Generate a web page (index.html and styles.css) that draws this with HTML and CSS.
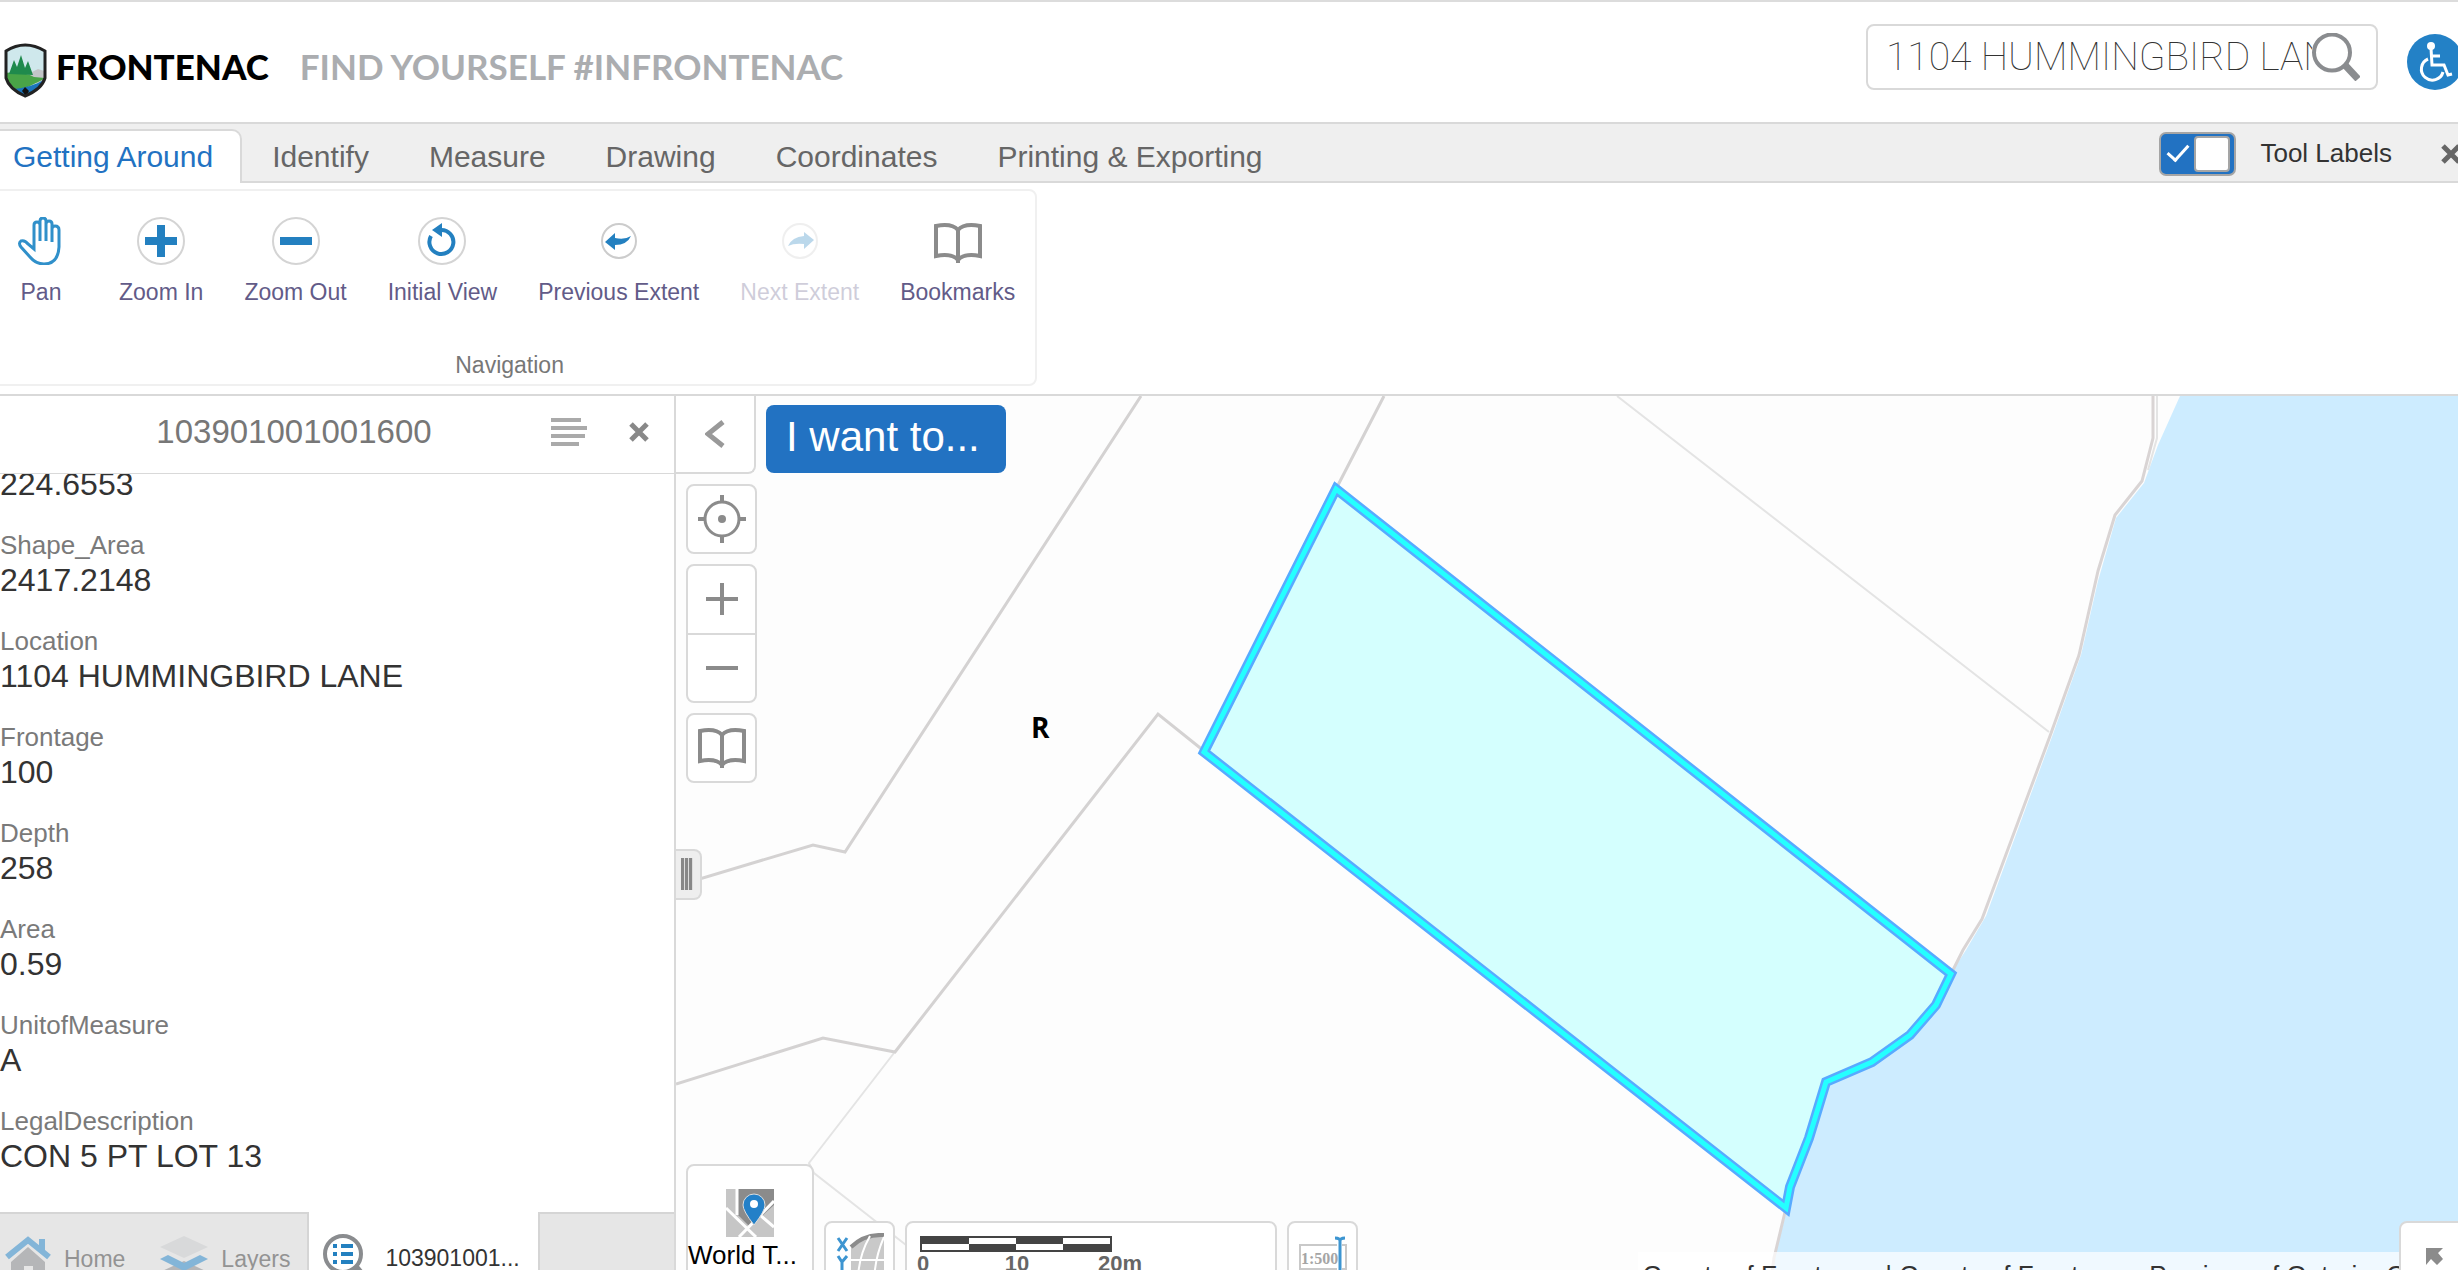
FILE: index.html
```html
<!doctype html>
<html lang="en">
<head>
  <meta charset="utf-8">
  <title>Frontenac Maps</title>
  <link rel="stylesheet" href="styles.css">
</head>
<body>
  <svg class="defs" width="0" height="0">
    <symbol id="book" viewBox="0 0 48 40">
      <path d="M2 3V33Q18 30 24 37Q30 30 46 33V3Q30 0 24 7Q18 0 2 3ZM24 7V40" fill="none" stroke="#8b8b8b" stroke-width="4"/>
    </symbol>
    <symbol id="cross" viewBox="0 0 20 20">
      <path d="M2 2L18 18M18 2L2 18" fill="none" stroke="currentColor" stroke-width="5"/>
    </symbol>
  </svg>

  <div class="app">
    <header class="header">
      <svg class="shield" viewBox="0 0 43 55">
        <clipPath id="shape"><path d="M2 8Q21 -4 41 8V35Q38 46 21 53Q5 46 2 35Z"/></clipPath>
        <g clip-path="url(#shape)">
          <path fill="#cfe8ec" d="M0 0H43V55H0Z"/>
          <path fill="#c3c6c8" d="M20 33L34 26L43 29V40H20Z"/>
          <path fill="#49a447" d="M0 30Q20 28 30 34L42 35L20 46H0Z"/>
          <path fill="#1f8a4c" d="M5 31L10 17L13 24L17 12L21 25L24 18L29 32Z"/>
          <path fill="#1b75bb" d="M10 46Q30 44 43 35V55H10Z"/>
          <path fill="#111" d="M18 48L21 44L25 48L22 53Z"/>
        </g>
        <path d="M2 8Q21 -4 41 8V35Q38 46 21 53Q5 46 2 35Z" fill="none" stroke="#222" stroke-width="3"/>
      </svg>
      <span class="brand">FRONTENAC</span>
      <span class="tagline">FIND YOURSELF #INFRONTENAC</span>
      <form class="search">
        <input type="text" aria-label="Search" value="1104 HUMMINGBIRD LANE">
        <button type="button" aria-label="Search">
          <svg width="48" height="48" viewBox="0 0 48 48"><path d="M32 31L46 46" stroke="#8a8c8f" stroke-width="7"/><circle cx="20" cy="19.500" r="18" fill="#fff" stroke="#8a8c8f" stroke-width="4"/></svg>
        </button>
      </form>
      <button class="access" type="button" aria-label="Accessibility">
        <svg width="56" height="56" viewBox="0 0 56 56">
          <circle cx="28" cy="28" r="28" fill="#2381c6"/>
          <circle cx="24" cy="12" r="4" fill="#fff"/>
          <path d="M24 14L25 31H37L41 41L45 40M25 22H33M21 25A11 11 0 1 0 36 38" fill="none" stroke="#fff" stroke-width="3"/>
        </svg>
      </button>
    </header>

    <nav class="tabs">
      <button class="tab active" type="button">Getting Around</button>
      <button class="tab" type="button">Identify</button>
      <button class="tab" type="button">Measure</button>
      <button class="tab" type="button">Drawing</button>
      <button class="tab" type="button">Coordinates</button>
      <button class="tab" type="button">Printing &amp; Exporting</button>
      <div class="options">
        <input type="checkbox" id="labels" class="toggle" checked>
        <label for="labels">Tool Labels</label>
        <button class="close" type="button" aria-label="Close toolbar"><svg width="20" height="20"><use href="#cross"/></svg></button>
      </div>
    </nav>

    <div class="ribbon">
      <section class="group">
        <div class="tools">
          <button class="tool" type="button">
            <svg width="48" height="48" viewBox="0 0 48 48"><path d="M17 31V8Q17 5 20 5Q23 5 23 8V24V4Q23 1 26 1Q29 1 29 4V24V7Q29 4 32 4Q35 4 35 7V25V12Q35 9 38 9Q42 9 42 13V30Q41 47 27 47Q19 47 13 40L4 30Q1 26 4 24Q8 23 11 27L17 32Z" fill="none" stroke="#3090ca" stroke-width="3"/></svg>
            <span>Pan</span>
          </button>
          <button class="tool" type="button">
            <svg width="48" height="48" viewBox="0 0 48 48"><circle cx="24" cy="24" r="23" fill="#fff" stroke="#d4d4d4" stroke-width="2"/><path d="M8 24H40M24 8V40" stroke="#2380c0" stroke-width="8"/></svg>
            <span>Zoom In</span>
          </button>
          <button class="tool" type="button">
            <svg width="48" height="48" viewBox="0 0 48 48"><circle cx="24" cy="24" r="23" fill="#fff" stroke="#d4d4d4" stroke-width="2"/><path d="M8 24H40" stroke="#2380c0" stroke-width="8"/></svg>
            <span>Zoom Out</span>
          </button>
          <button class="tool" type="button">
            <svg width="48" height="48" viewBox="0 0 48 48"><circle cx="24" cy="24" r="23" fill="#fff" stroke="#d4d4d4" stroke-width="2"/><path d="M13 19A12 12 0 1 0 23 13" fill="none" stroke="#2380c0" stroke-width="4"/><path d="M14 13L24 6V20Z" fill="#2380c0"/></svg>
            <span>Initial View</span>
          </button>
          <button class="tool" type="button">
            <svg width="48" height="48" viewBox="0 0 48 48"><circle cx="24" cy="24" r="17" fill="#fff" stroke="#ccc" stroke-width="2"/><path d="M10 25L20 16V21Q30 23 36 19Q32 28 20 28V33Z" fill="#2380c0"/></svg>
            <span>Previous Extent</span>
          </button>
          <button class="tool" type="button" disabled>
            <svg width="48" height="48" viewBox="0 0 48 48"><circle cx="24" cy="24" r="17" fill="#fff" stroke="#ccc" stroke-width="2"/><path d="M38 23L28 15V19Q16 20 12 29Q18 26 28 27V32Z" fill="#2380c0"/></svg>
            <span>Next Extent</span>
          </button>
          <button class="tool" type="button">
            <svg width="48" height="48" viewBox="0 -6 48 48"><use href="#book" width="48" height="40"/></svg>
            <span>Bookmarks</span>
          </button>
        </div>
        <div class="group-name">Navigation</div>
      </section>
    </div>

    <div class="main">
      <aside class="panel">
        <div class="panel-head">
          <h2>103901001001600</h2>
          <button type="button" aria-label="Menu"><svg width="36" height="28" viewBox="0 0 36 28"><path d="M0 2H30M0 10H36M0 18H34M0 26H28" stroke="#aaa" stroke-width="4"/></svg></button>
          <button type="button" aria-label="Close panel"><svg width="20" height="20"><use href="#cross"/></svg></button>
        </div>
        <dl class="details">
          <dd>224.6553</dd>
          <dt>Shape_Area</dt>
          <dd>2417.2148</dd>
          <dt>Location</dt>
          <dd>1104 HUMMINGBIRD LANE</dd>
          <dt>Frontage</dt>
          <dd>100</dd>
          <dt>Depth</dt>
          <dd>258</dd>
          <dt>Area</dt>
          <dd>0.59</dd>
          <dt>UnitofMeasure</dt>
          <dd>A</dd>
          <dt>LegalDescription</dt>
          <dd>CON 5 PT LOT 13</dd>
        </dl>
        <div class="panel-tabs">
          <div class="inactive">
            <button type="button">
              <svg width="46" height="46" viewBox="0 0 46 46"><path d="M6 26L23 11L40 26V46H28V30H19V46H6Z" fill="#b5b6b8"/><path d="M2 21L23 4L44 21M37 14V3" fill="none" stroke="#83b5d8" stroke-width="6"/></svg>
              Home
            </button>
            <button type="button">
              <svg width="48" height="46" viewBox="0 0 48 46"><path d="M0 36L24 25L48 36L24 47Z" fill="#b5b6b8"/><path d="M0 23L8 19L24 27L40 19L48 23L24 35Z" fill="#83b5d8"/><path d="M0 11L24 0L48 11L24 22Z" fill="#d8d9da"/></svg>
              Layers
            </button>
          </div>
          <button class="current" type="button">
            <svg width="46" height="50" viewBox="0 0 46 50"><path d="M33 33L44 46" stroke="#8a8c8f" stroke-width="6"/><circle cx="20" cy="20" r="18" fill="#fff" stroke="#8a8c8f" stroke-width="4"/><path d="M10 12H14M18 12H30M10 20H14M18 20H30M10 28H14M18 28H30" stroke="#2380c0" stroke-width="4"/></svg>
            103901001...
          </button>
          <div class="rest"></div>
        </div>
      </aside>

      <div class="map">
        <svg class="canvas" viewBox="676 396 1782 906" preserveAspectRatio="xMinYMin slice">
          <path class="water" d="M2180 396L2158 445L2144 483L2116 518L2098 581L2081 655L2053 734L1986 916L1966 950L1951 973L1826 1082L1792 1190L1776 1252L1768 1302H2458V396Z"/>
          <g class="lot">
            <path d="M1617 396L2049 732M894 1053L809 1163L814 1173L874 1220L906 1245"/>
            <path class="dark" d="M1141 396L845 852L813 845L676 886M1384 396L1336 489M676 1084L823 1038L895 1052L1158 714L1204 751"/>
            <path class="edge" d="M2153 396V438L2142 481L2115 515L2098 571L2079 655L2050 736L1982 919L1963 950L1953 970M1785 1212L1774 1258L1768 1302"/>
            <path d="M2157 396V438L2148 470"/>
          </g>
          <path class="parcel" d="M1336 489L1951 974L1936 1005L1910 1035L1872 1062L1826 1082L1809 1138L1790 1187L1786 1208L1204 752Z"/>
          <path class="parcel-core" d="M1336 489L1951 974L1936 1005L1910 1035L1872 1062L1826 1082L1809 1138L1790 1187L1786 1208L1204 752Z"/>
          <text x="1031" y="738">R</text>
        </svg>

        <div class="controls">
          <button class="collapse" type="button" aria-label="Hide panel"><svg width="20" height="28" viewBox="0 0 20 28"><path d="M18 2L3 14L18 26" fill="none" stroke="#999" stroke-width="5"/></svg></button>
          <button class="box" type="button" aria-label="My location"><svg width="48" height="48" viewBox="0 0 48 48"><circle cx="24" cy="24" r="17" fill="none" stroke="#8b8b8b" stroke-width="3"/><circle cx="24" cy="24" r="4" fill="#8b8b8b"/><path d="M24 0V8M24 40V48M0 24H8M40 24H48" stroke="#8b8b8b" stroke-width="4"/></svg></button>
          <div class="box zoom">
            <button type="button" aria-label="Zoom in"><svg width="32" height="32"><path d="M0 16H32M16 0V32" stroke="#8b8b8b" stroke-width="4"/></svg></button>
            <button type="button" aria-label="Zoom out"><svg width="32" height="32"><path d="M0 16H32" stroke="#8b8b8b" stroke-width="4"/></svg></button>
          </div>
          <button class="box" type="button" aria-label="Bookmarks"><svg width="48" height="40"><use href="#book"/></svg></button>
        </div>
        <button class="want" type="button">I want to...</button>
        <div class="handle"></div>

        <div class="bottom">
          <button class="box basemap" type="button">
            <svg width="48" height="48" viewBox="0 0 48 48">
              <path d="M0 0H48V48H0Z" fill="#c6c6c6"/><path d="M12 0H48V16L24 38L12 26Z" fill="#8b8b8b"/>
              <path d="M11 0V26M0 19L30 48M48 12L13 48M34 26L48 38" fill="none" stroke="#fff" stroke-width="3"/>
              <path d="M28 36Q17 22 17 16A11 11 0 0 1 39 16Q39 22 28 36Z" fill="#2380c8" stroke="#ddd" stroke-width="1"/><circle cx="28" cy="15" r="4" fill="#fff"/>
            </svg>
            <span>World T...</span>
          </button>
          <button class="box" type="button" aria-label="Coordinates">
            <svg width="48" height="48" viewBox="0 0 48 48">
              <path d="M15 48V14Q28 1 48 2V48Z" fill="#c9c9c9"/><path d="M15 14Q28 1 48 2M0 40L-1 48" fill="none" stroke="#8b8b8b" stroke-width="4"/>
              <path d="M34 3Q22 24 22 48M48 4Q39 24 38 48M15 27H48M15 42H48" fill="none" stroke="#fff" stroke-width="2"/>
              <path d="M2 5L11 18M11 5L2 18M2 23L6 29L11 23M6 29V37" fill="none" stroke="#3d95d1" stroke-width="3"/>
            </svg>
          </button>
          <div class="box scale">
            <div class="bar"><i></i><i></i><i></i><i></i></div>
            <div class="ticks"><span>0</span><span>10</span><span>20m</span></div>
          </div>
          <button class="box" type="button" aria-label="Map scale">
            <svg width="48" height="48" viewBox="0 0 48 48">
              <path d="M38 12H1V36H38M43 12H47V36H43" fill="none" stroke="#c9c9c9" stroke-width="2"/>
              <text x="2" y="31" class="ratio">1:500</text>
              <path d="M36 5Q41 5 41 8Q41 5 46 5M41 7V42" fill="none" stroke="#3d95d1" stroke-width="3"/>
            </svg>
          </button>
        </div>
        <div class="credits">County of Frontenac | County of Frontenac, Province of Ontario, C</div>
        <button class="box overview" type="button" aria-label="Overview map"><svg width="20" height="20" viewBox="0 0 20 20"><path d="M1 1H18L13 6L18 12L12 18L6 12L1 18Z" fill="#8b8b8b"/></svg></button>
      </div>
    </div>
  </div>
</body>
</html>
```
FILE: styles.css
```css
* { box-sizing: border-box; }
html, body { height: 100%; }
body {
  margin: 0;
  overflow: hidden;
  background: #fff;
  color: #333;
  font-family: "Liberation Sans", Arial, sans-serif;
}
button {
  margin: 0;
  padding: 0;
  border: 0;
  background: none;
  font: inherit;
  color: inherit;
}
svg { display: block; flex: none; }
.defs { position: absolute; }

/* runs a little past the bottom of the window */
.app {
  display: flex;
  flex-direction: column;
  height: calc(100% + 32px);
  overflow: hidden;
}

.header {
  display: flex;
  align-items: center;
  height: 124px;
  flex: none;
  padding-left: 4px;
  border-top: 2px solid #dcdcdc;
  border-bottom: 2px solid #d9d9d9;
  font-family: Lato, sans-serif;
  white-space: nowrap;
}
.shield { width: 43px; height: 55px; margin: 16px 9px 0 0; }
.brand {
  padding-top: 8px;
  font-size: 35px;
  font-weight: 900;
  color: #000;
}
.tagline {
  padding: 8px 0 0 31px;
  font-size: 35px;
  font-weight: 700;
  color: #abadb0;
}
.search {
  display: flex;
  align-items: center;
  width: 512px;
  height: 66px;
  margin: 0 29px 10px auto;
  padding: 0 16px 0 18px;
  border: 2px solid #d9d9d9;
  border-radius: 8px;
}
.search input {
  flex: 1;
  min-width: 0;
  padding: 0;
  border: 0;
  outline: 0;
  background: none;
  color: #333;
  font-family: Roboto, sans-serif;
  font-size: 39px;
  font-weight: 100;
}
.access { margin: 0 -5px 0 0; }

.tabs {
  display: flex;
  height: 59px;
  flex: none;
  padding-top: 5px;
  border-bottom: 2px solid #d9d9d9;
  background: #efefef;
}
.tab {
  padding: 3px 30px 0;
  font-size: 30px;
  color: #666;
}
.tab.active {
  margin-bottom: -2px;
  padding: 0 27px 0 13px;
  border: solid #d9d9d9;
  border-width: 2px 2px 0 0;
  border-radius: 0 10px 0 0;
  background: #fff;
  color: #2272c2;
}
.options {
  display: flex;
  align-items: center;
  margin: 0 -3px 3px auto;
  font-size: 26px;
}
.toggle {
  appearance: none;
  display: flex;
  align-items: center;
  justify-content: space-between;
  width: 77px;
  height: 44px;
  margin: 0 24px 0 0;
  padding: 0 4px 0 11px;
  border: 2px solid #a5a5a5;
  border-radius: 7px;
  background: #2272c2;
}
.toggle::before {
  content: "";
  width: 9px;
  height: 18px;
  margin-bottom: 6px;
  border: solid #fff;
  border-width: 0 3px 3px 0;
  transform: rotate(42deg);
}
.toggle::after {
  content: "";
  width: 32px;
  height: 32px;
  border: 2px solid #a5a5a5;
  border-radius: 4px;
  background: #fff;
}
.close { margin-left: 49px; color: #666; }

.ribbon {
  flex: none;
  padding: 6px 0 8px;
  border-bottom: 2px solid #d9d9d9;
}
.group {
  width: max-content;
  height: 197px;
  margin-left: -18px;
  border: 2px solid #f0f0f0;
  border-radius: 8px;
  font-size: 23px;
}
.tools { display: flex; gap: 1px; height: 160px; padding-top: 26px; }
.tool {
  display: flex;
  flex-direction: column;
  align-items: center;
  gap: 13px;
  min-width: 114px;
  padding: 0 20px;
  line-height: 28px;
  color: #625b88;
}
.tool:disabled { opacity: .3; }
.group-name { text-align: center; line-height: 28px; color: #777; }

.main { display: flex; flex: 1; min-height: 0; }
.panel {
  display: flex;
  flex-direction: column;
  width: 676px;
  flex: none;
  border-right: 2px solid #d9d9d9;
}
.panel-head {
  display: flex;
  align-items: center;
  flex: none;
  height: 78px;
  padding: 0 25px 6px 0;
  border-bottom: 1px solid #d9d9d9;
  color: #888;
}
.panel-head h2 {
  flex: 1;
  margin: 0;
  padding-left: 37px;
  font-size: 33px;
  font-weight: normal;
  text-align: center;
  color: #777;
}
.panel-head button { margin-left: 42px; }
.panel-head h2 + button { margin-left: 0; }
.details {
  display: flex;
  flex-direction: column;
  justify-content: flex-end;
  flex: 1;
  min-height: 0;
  margin: 0;
  padding-bottom: 8px;
  overflow: hidden;
}
.details dt {
  flex: none;
  margin-bottom: 4px;
  font-size: 26px;
  line-height: 26px;
  color: #7a7a7a;
}
.details dd {
  flex: none;
  margin: 0 0 29px;
  font-size: 32px;
  line-height: 37px;
}
.panel-tabs {
  display: flex;
  flex: none;
  height: 90px;
  font-size: 23px;
}
.panel-tabs button { display: flex; align-items: center; gap: 13px; }
.inactive {
  display: flex;
  gap: 35px;
  padding: 2px 17px 0 5px;
  border: solid #d5d5d5;
  border-width: 2px 2px 0 0;
  background: #e6e6e6;
  color: #939393;
}
.panel-tabs .current { gap: 16px; padding: 3px 18px 0 14px; white-space: nowrap; }
.rest {
  flex: 1;
  border: solid #d5d5d5;
  border-width: 2px 0 0 2px;
  background: #e6e6e6;
}

.map {
  position: relative;
  flex: 1;
  min-width: 0;
  overflow: hidden;
  background: #fdfdfd;
}
.canvas { width: 100%; height: 100%; }
.canvas text {
  font: 700 28px "Open Sans", sans-serif;
}
.water { fill: #cdecff; }
.lot path { fill: none; stroke: #e4e4e4; stroke-width: 2; }
.lot .dark { stroke: #d4d2d2; stroke-width: 3; }
.lot .edge { stroke: #d9d4d4; stroke-width: 3; }
.parcel { fill: #d4fffe; stroke: #58aaff; stroke-width: 10; }
.parcel-core { fill: none; stroke: #24ffff; stroke-width: 5; }

.box {
  display: flex;
  align-items: center;
  justify-content: center;
  width: 71px;
  height: 70px;
  border: 2px solid #d9d9d9;
  border-radius: 8px;
  background: #fff;
}
.controls {
  position: absolute;
  top: 0;
  left: 0;
  display: flex;
  flex-direction: column;
  gap: 10px;
}
.controls .box { margin-left: 10px; }
.collapse {
  display: flex;
  align-items: center;
  justify-content: center;
  width: 80px;
  height: 78px;
  border: solid #d9d9d9;
  border-width: 0 2px 2px 0;
  border-radius: 0 0 8px 0;
  background: #fff;
}
.controls .zoom { flex-direction: column; height: 139px; }
.zoom button {
  display: flex;
  align-items: center;
  justify-content: center;
  flex: 1;
  width: 100%;
}
.zoom button + button { border-top: 2px solid #d9d9d9; }
.want {
  position: absolute;
  top: 9px;
  left: 90px;
  height: 68px;
  padding: 0 26px 4px 20px;
  border-radius: 8px;
  background: #2272c2;
  font-size: 42px;
  color: #fff;
}
.handle {
  position: absolute;
  top: 453px;
  left: 0;
  width: 26px;
  height: 51px;
  padding: 7px 7px 0 5px;
  border: 2px solid #d9d9d9;
  border-left: 0;
  border-radius: 0 8px 8px 0;
  background: #eee;
}
.handle::before {
  content: "";
  display: block;
  height: 32px;
  background: repeating-linear-gradient(90deg, #888 0 3px, #ddd 3px 4px);
}
.bottom {
  position: absolute;
  bottom: 10px;
  left: 10px;
  display: flex;
  align-items: flex-end;
  gap: 10px;
}
.bottom .box { height: 71px; }
.bottom .basemap {
  flex-direction: column;
  justify-content: flex-start;
  gap: 1px;
  width: 128px;
  height: 128px;
  padding: 23px 0 0;
  font-size: 26px;
  line-height: 34px;
  color: #000;
  white-space: nowrap;
}
.basemap span { align-self: flex-start; }
.bottom .scale {
  display: block;
  width: 372px;
  padding: 13px;
}
.bar {
  display: grid;
  grid-template-columns: repeat(4, 1fr);
  width: 192px;
  height: 16px;
  border: 2px solid #444;
}
.bar i { background: linear-gradient(#444 50%, #fff 50%); }
.bar i:nth-child(even) { background: linear-gradient(#fff 50%, #444 50%); }
.ticks {
  display: flex;
  justify-content: space-between;
  width: 225px;
  margin-left: -3px;
  font-size: 22px;
  font-weight: bold;
  line-height: 24px;
  color: #666;
}
.ticks span:nth-child(2) { margin-left: 7px; }
.ratio {
  font: bold 16px "Liberation Serif", serif;
  fill: #a5a5a5;
}
.credits {
  position: absolute;
  right: 0;
  bottom: 0;
  height: 50px;
  padding: 7px 53px 0 4px;
  background: rgba(255, 255, 255, .7);
  font-size: 26px;
  line-height: 32px;
  white-space: nowrap;
}
.overview {
  position: absolute;
  right: -12px;
  bottom: 10px;
  height: 71px;
}
```
